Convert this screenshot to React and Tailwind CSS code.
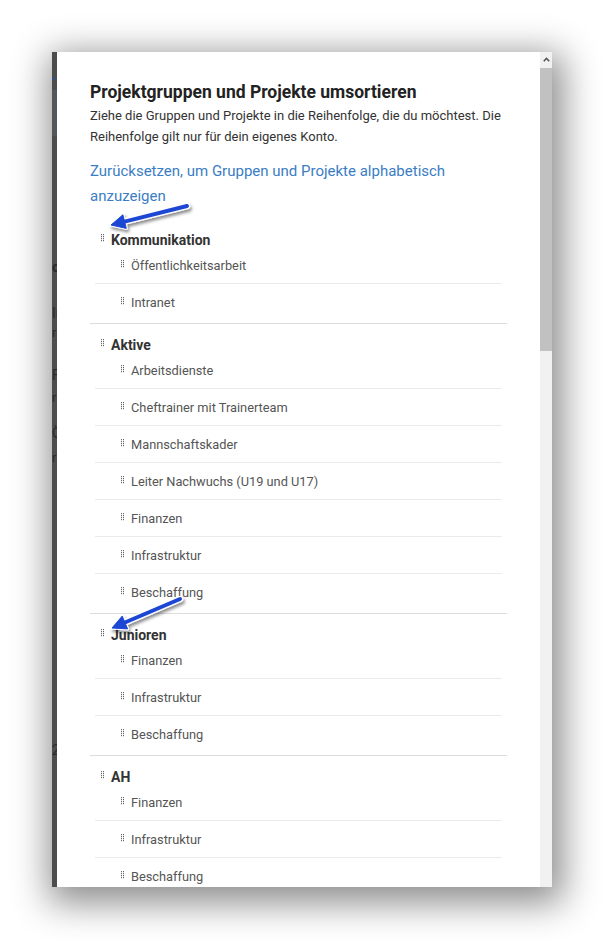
import React from "react";

function Handle({ className = "" }) {
  return (
    <svg width="3" height="8" viewBox="0 0 3 8" className={"shrink-0 " + className}>
      {[0, 2, 4, 6].map((y) => (
        <g key={y}>
          <rect x="0" y={y} width="1" height="1.2" fill="#666" />
          <rect x="2" y={y} width="1" height="1.2" fill="#666" />
        </g>
      ))}
    </svg>
  );
}

const groups = [
  { name: "Kommunikation", items: ["Öffentlichkeitsarbeit", "Intranet"] },
  {
    name: "Aktive",
    items: [
      "Arbeitsdienste",
      "Cheftrainer mit Trainerteam",
      "Mannschaftskader",
      "Leiter Nachwuchs (U19 und U17)",
      "Finanzen",
      "Infrastruktur",
      "Beschaffung",
    ],
  },
  { name: "Junioren", items: ["Finanzen", "Infrastruktur", "Beschaffung"] },
  { name: "AH", items: ["Finanzen", "Infrastruktur", "Beschaffung"] },
];

function Arrow({ tail, base, w1, w2, tip }) {
  return (
    <g filter="url(#sh)">
      <line x1={tail[0]} y1={tail[1]} x2={base[0]} y2={base[1]} stroke="#ffffff" strokeWidth="6.5" strokeLinecap="round" />
      <polygon points={`${tip[0]},${tip[1]} ${w1[0]},${w1[1]} ${w2[0]},${w2[1]}`} fill="#ffffff" stroke="#ffffff" strokeWidth="3" strokeLinejoin="round" />
      <line x1={tail[0]} y1={tail[1]} x2={base[0]} y2={base[1]} stroke="#1f47d4" strokeWidth="4" strokeLinecap="round" />
      <polygon points={`${tip[0]},${tip[1]} ${w1[0]},${w1[1]} ${w2[0]},${w2[1]}`} fill="#1f47d4" stroke="#1f47d4" strokeWidth="1" strokeLinejoin="round" />
    </g>
  );
}

export default function App() {
  return (
    <div className="relative w-[604px] h-[940px] bg-white pt-[52px] pl-[52px] font-['Roboto',sans-serif] overflow-hidden">
      <div className="flex h-[835px] w-[500px] overflow-hidden shadow-[4px_9px_34px_7px_rgba(0,0,0,0.45)]">
        {/* underlying page strip */}
        <div className="w-[5px] shrink-0 bg-[#4d4d4d] overflow-hidden flex flex-col text-[#2a2a2a] leading-none whitespace-nowrap">
          <div className="h-[26px]" />
          <div className="h-[2px] w-[3px] bg-[#2f4f8f]" />
          <div className="h-[10px]" />
          <div className="h-[46px] bg-[#52575c]" />
          <div className="h-[124px]" />
          <div className="text-[15px] font-bold h-[46px]">c</div>
          <div className="text-[14px] h-[20px]">In</div>
          <div className="text-[13px] h-[42px]">r</div>
          <div className="text-[14px] h-[23px]">F</div>
          <div className="text-[13px] h-[35px]">r</div>
          <div className="text-[14px] h-[25px]">Ö</div>
          <div className="text-[13px] h-[292px]">r</div>
          <div className="text-[14px]">2</div>
        </div>

        {/* modal content */}
        <div className="w-[483px] shrink-0 bg-white px-[33px] pt-[28px] overflow-hidden">
          <h2 className="text-[17.5px] font-bold leading-[24px] text-[#222]">
            Projektgruppen und Projekte umsortieren
          </h2>
          <p className="mt-[1px] text-[13px] leading-[21px] text-[#333]">
            Ziehe die Gruppen und Projekte in die Reihenfolge, die du möchtest. Die Reihenfolge gilt nur für dein eigenes Konto.
          </p>
          <p className="mt-[12px] text-[15px] leading-[25px] text-[#3b7dc4]">
            Zurücksetzen, um Gruppen und Projekte alphabetisch anzuzeigen
          </p>
          <div className="mt-[10px]">
            {groups.map((g) => (
              <div key={g.name} className="border-b border-[#dcdcdc] pb-[3px]">
                <div className="flex items-start pl-[11px] pt-[14px] text-[14px] font-bold leading-[14px] text-[#333]">
                  <Handle className="mt-[1px]" />
                  <span className="ml-[7px]">{g.name}</span>
                </div>
                <div className="px-[5px]">
                  {g.items.map((it, i) => (
                    <div
                      key={i}
                      className={
                        "flex items-start pl-[26px] pt-[11px] pb-[9px] text-[12.8px] leading-[16px] text-[#555] " +
                        (i < g.items.length - 1 ? "border-b border-[#ebebeb]" : "")
                      }
                    >
                      <Handle className="mt-[2px]" />
                      <span className="ml-[7px]">{it}</span>
                    </div>
                  ))}
                </div>
              </div>
            ))}
          </div>
        </div>

        {/* scrollbar */}
        <div className="w-[12px] shrink-0 bg-[#f1f1f1] flex flex-col">
          <div className="h-[16px] flex items-start justify-center pt-[5px]">
            <svg width="7" height="5" viewBox="0 0 7 5">
              <path d="M0.8 4.2 L3.5 1.3 L6.2 4.2" fill="none" stroke="#505050" strokeWidth="1.6" />
            </svg>
          </div>
          <div className="h-[283px] bg-[#c1c1c1]" />
        </div>
      </div>

      <svg className="absolute left-0 top-0 pointer-events-none" width="604" height="940">
        <defs>
          <filter id="sh" x="-20%" y="-50%" width="140%" height="200%">
            <feDropShadow dx="1.5" dy="2.5" stdDeviation="1.8" floodColor="#000" floodOpacity="0.45" />
          </filter>
        </defs>
        <Arrow tail={[187, 206]} base={[124.6, 221.6]} w1={[126.3, 228.4]} w2={[122.9, 214.8]} tip={[111, 225]} />
        <Arrow tail={[180, 599]} base={[124.9, 622.5]} w1={[127.6, 628.9]} w2={[122.2, 616.1]} tip={[112, 628]} />
      </svg>
    </div>
  );
}
